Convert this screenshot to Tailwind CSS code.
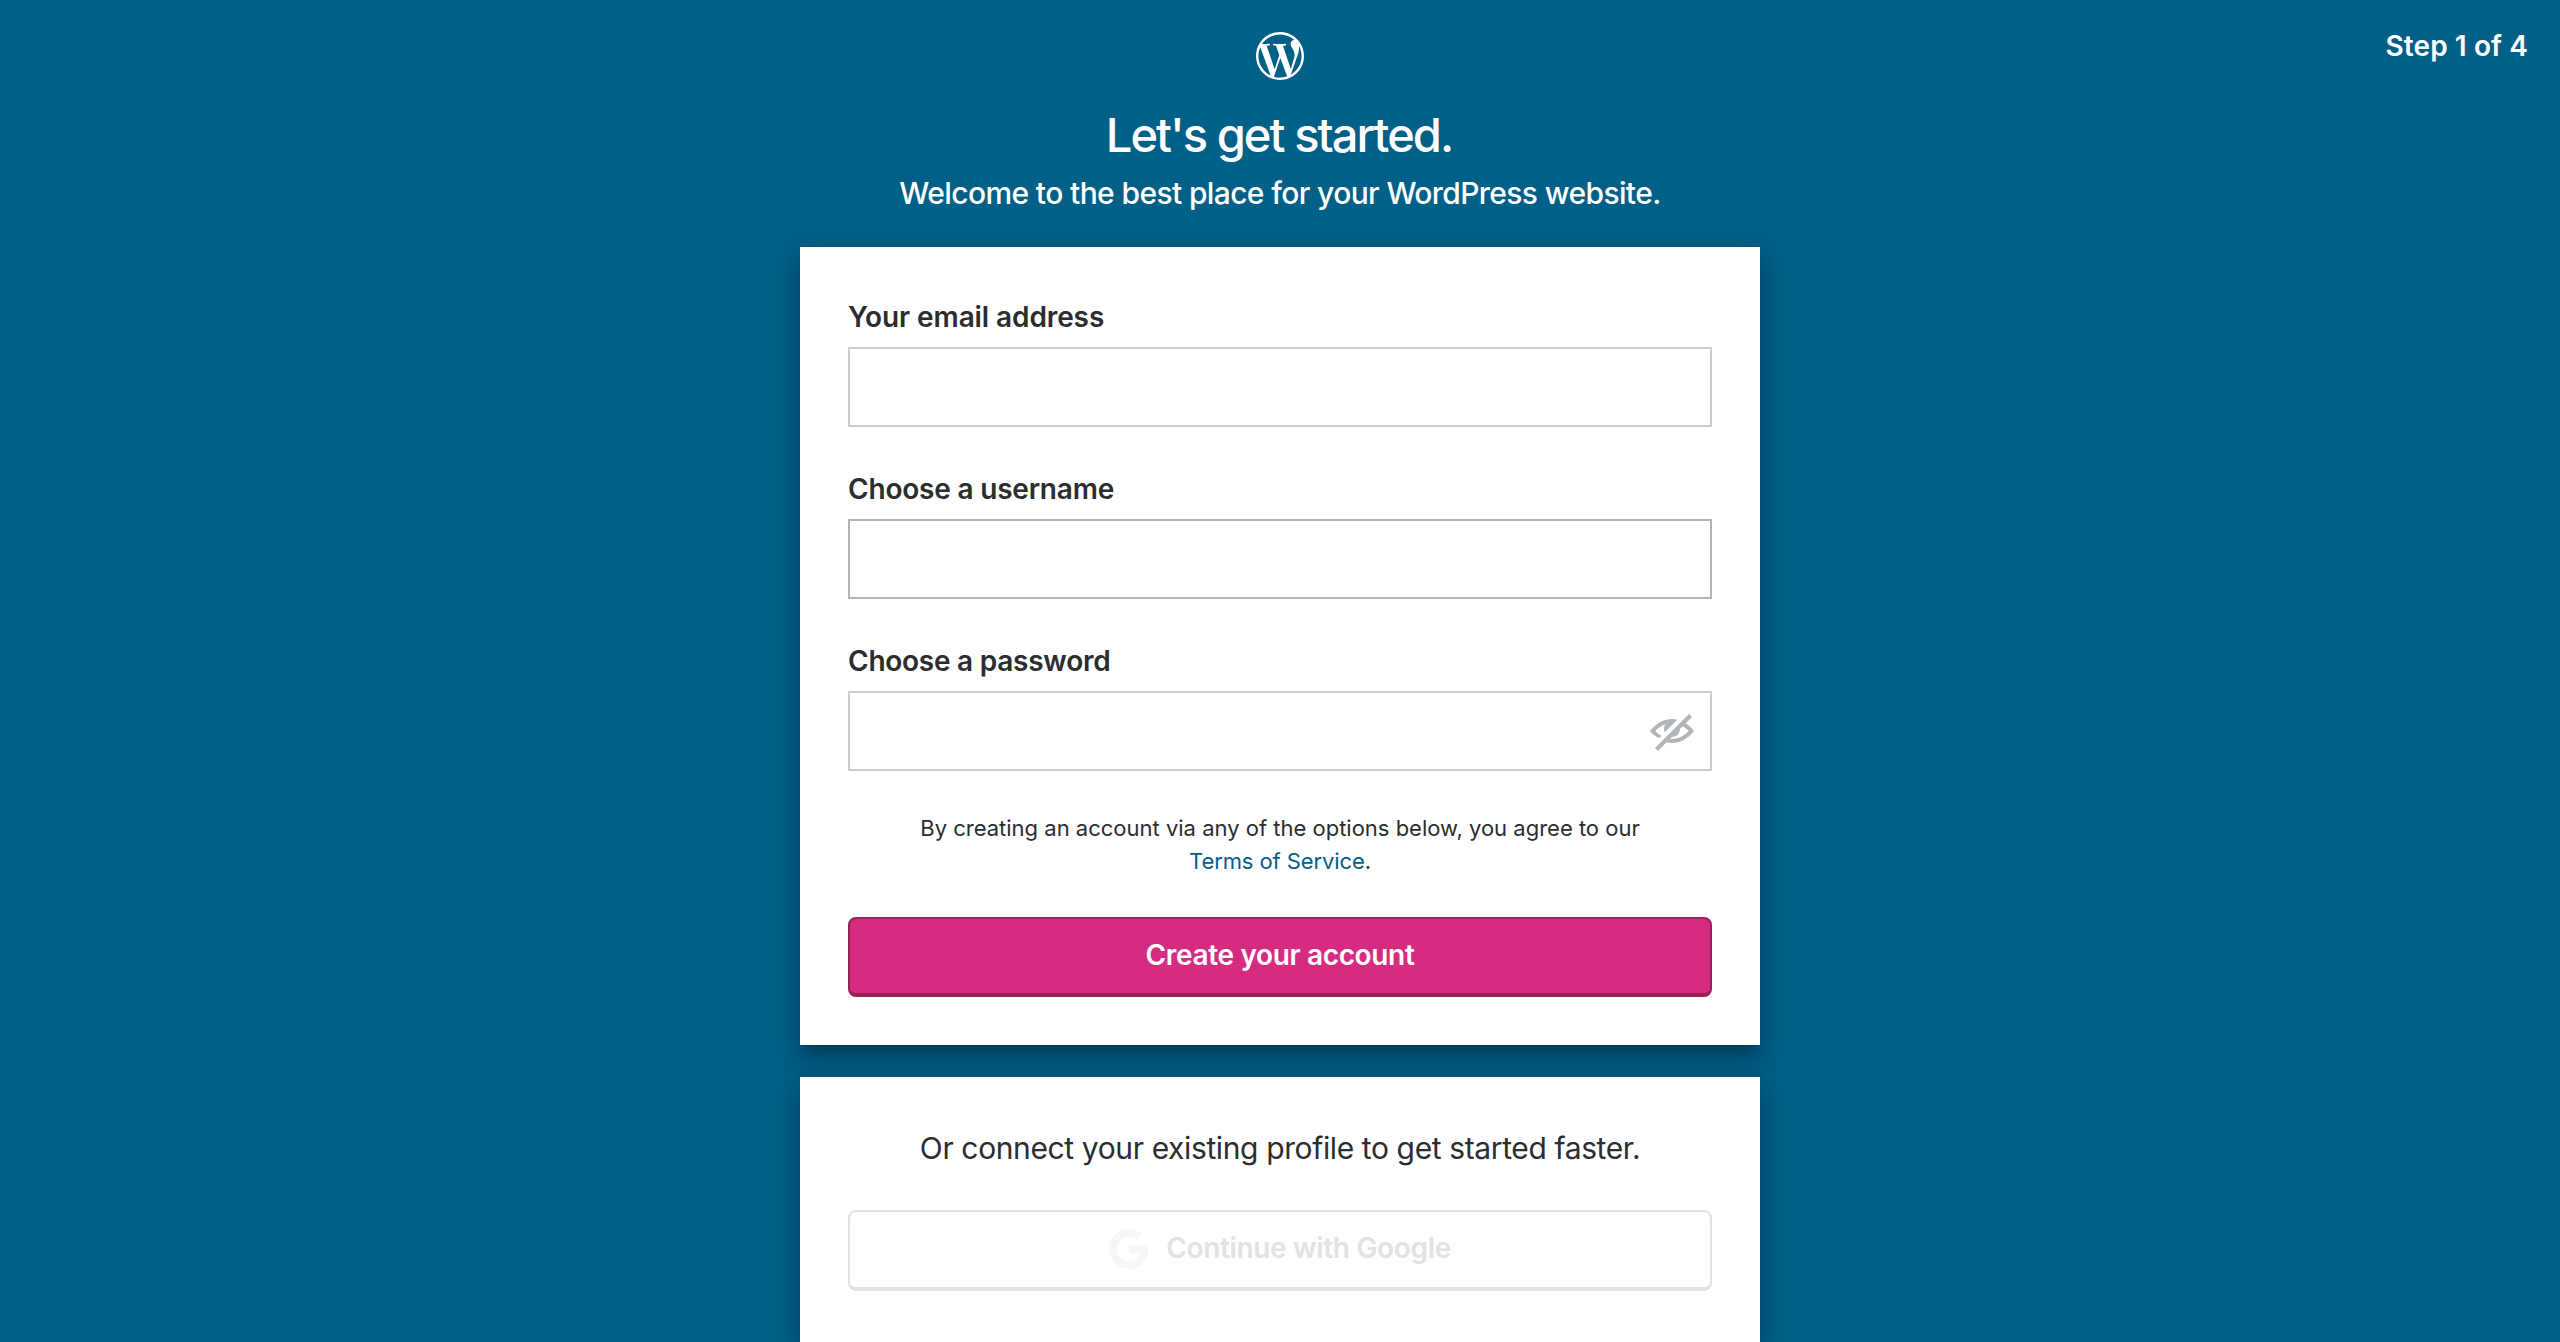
<!DOCTYPE html>
<html lang="en">
<head>
<meta charset="utf-8">
<title>Create an account — WordPress.com</title>
<script src="https://cdn.jsdelivr.net/npm/@tailwindcss/browser@4"></script>
</head>
<body class="relative h-screen overflow-hidden bg-[#016087] font-['Inter',sans-serif] text-[#2b2d2f]">
  <p class="absolute top-[26px] right-[32px] text-[28px] leading-10 font-semibold tracking-[0.1px] text-white">Step 1 of 4</p>

  <div class="flex h-full flex-col items-center pt-8">
    <svg class="size-12 shrink-0 fill-white" viewBox="0 0 24 24" aria-label="WordPress"><path d="M21.469 6.825c.84 1.537 1.318 3.3 1.318 5.175 0 3.979-2.156 7.456-5.363 9.325l3.295-9.527c.615-1.54.82-2.771.82-3.864 0-.405-.026-.78-.07-1.11m-7.981.105c.647-.03 1.232-.105 1.232-.105.582-.075.514-.93-.067-.899 0 0-1.755.135-2.88.135-1.064 0-2.85-.15-2.85-.15-.585-.03-.661.855-.075.885 0 0 .54.061 1.125.09l1.68 4.605-2.37 7.08L5.354 6.9c.649-.03 1.234-.1 1.234-.1.585-.075.516-.93-.065-.896 0 0-1.746.138-2.874.138-.2 0-.438-.008-.69-.015C4.911 3.15 8.235 1.215 12 1.215c2.809 0 5.365 1.072 7.286 2.833-.046-.003-.091-.009-.141-.009-1.06 0-1.812.923-1.812 1.914 0 .89.513 1.643 1.06 2.531.411.72.89 1.643.89 2.977 0 .915-.354 1.994-.821 3.479l-1.075 3.585-3.9-11.61.001.014zM12 22.784c-1.059 0-2.081-.153-3.048-.437l3.237-9.406 3.315 9.087c.024.053.05.101.078.149-1.12.393-2.325.609-3.582.609M1.211 12c0-1.564.336-3.05.935-4.39L7.29 21.709C3.694 19.96 1.212 16.271 1.211 12M12 0C5.385 0 0 5.385 0 12s5.385 12 12 12 12-5.385 12-12S18.615 0 12 0"/></svg>
    <h1 class="mt-[26px] pr-0.5 text-[47px] leading-[58px] font-[450] tracking-[-1.95px] text-white">Let's get started.</h1>
    <p class="mt-[9px] text-[30px] leading-10 font-medium tracking-[-0.62px] text-white">Welcome to the best place for your WordPress website.</p>

    <form class="mt-[34px] flex w-[960px] shrink-0 flex-col bg-white px-12 pt-[50px] pb-12 shadow-[0_10px_10px_-6px_rgba(0,0,0,0.2),0_16px_20px_2px_rgba(0,0,0,0.14),0_6px_28px_4px_rgba(0,0,0,0.12)]">
      <label for="email" class="text-[28px] leading-10 font-semibold tracking-[-0.1px]">Your email address</label>
      <input id="email" type="email" class="mt-2.5 h-20 w-full border-2 border-[#ccc] bg-white px-6 outline-none">
      <label for="username" class="mt-[42px] text-[28px] leading-10 font-semibold tracking-[-0.2px]">Choose a username</label>
      <input id="username" type="text" class="mt-2.5 h-20 w-full border-2 border-[#aeb4b8] bg-white px-6 outline-none">
      <label for="password" class="mt-[42px] text-[28px] leading-10 font-semibold tracking-[-0.25px]">Choose a password</label>
      <div class="mt-2.5 flex h-20 items-center border-2 border-[#ccc] bg-white pr-3.5">
        <input id="password" type="password" class="h-full flex-1 px-6 outline-none">
        <svg class="size-12 fill-[#b0b5b8]" viewBox="0 0 24 24"><path d="M1 12s4.188-6 11-6c.947 0 1.84.12 2.678.322L8.36 12.64C8.133 12.14 8 11.586 8 11c0-.937.335-1.787.875-2.47-2.483.917-4.345 2.48-5.26 3.464.61.642 1.76 1.68 3.2 2.43L5.68 15.56C2.6 14.2 1 12 1 12zm22 0s-4.188 6-11 6c-.946 0-1.836-.124-2.676-.323L5 22l-1.5-1.5 17-17L22 5l-3.147 3.147C21.5 9.785 23 12 23 12zm-2.615.006c-.678-.708-1.697-1.624-2.987-2.403L16 11c0 2.21-1.79 4-4 4l-.947.947c.31.031.624.053.947.053 3.978 0 6.943-2.478 8.385-3.994z"/></svg>
      </div>
      <p class="mt-[41px] text-center text-[22px] leading-[33px]">By creating an account via any of the options below, you agree to our<br><a class="tracking-[-0.1px] text-[#016087]">Terms of Service</a>.</p>
      <button type="button" class="mt-[39px] h-20 rounded-lg border-2 border-b-4 border-[#992053] bg-[#d52c82] pb-0.5 text-[28px] leading-10 font-semibold tracking-[-0.35px] text-white">Create your account</button>
    </form>

    <section class="mt-8 flex w-[960px] flex-1 flex-col bg-white px-12 pt-[51px] shadow-[0_10px_10px_-6px_rgba(0,0,0,0.2),0_16px_20px_2px_rgba(0,0,0,0.14),0_6px_28px_4px_rgba(0,0,0,0.12)]">
      <p class="text-center text-[30px] leading-10 tracking-[-0.38px]">Or connect your existing profile to get started faster.</p>
      <button type="button" class="mt-[42px] flex h-[81px] items-center justify-center rounded-lg border-2 border-b-4 border-[#e1e2e2] bg-white pb-0.5 text-[28px] leading-10 font-semibold tracking-[-0.33px] text-[#e1e2e2]">
        <svg class="mr-[17px] size-10 fill-[#f6f6f6]" viewBox="0 0 20 20"><path d="M19.6 10.23c0-.82-.1-1.42-.25-2.05H10v3.72h5.5c-.15.96-.74 2.31-2.04 3.22v2.45h3.16c1.89-1.73 2.98-4.3 2.98-7.34z"/><path d="M13.46 15.13c-.83.59-1.96 1-3.46 1-2.64 0-4.88-1.74-5.68-4.15H1.07v2.52C2.72 17.75 6.09 20 10 20c2.7 0 4.96-.89 6.62-2.42l-3.16-2.45z"/><path d="M3.99 10c0-.69.12-1.35.32-1.97V5.51H1.07A9.973 9.973 0 000 10c0 1.61.39 3.14 1.07 4.49l3.24-2.52c-.2-.62-.32-1.28-.32-1.97z"/><path d="M10 3.88c1.88 0 3.13.81 3.85 1.48l2.84-2.76C14.96.99 12.7 0 10 0 6.09 0 2.72 2.25 1.07 5.51l3.24 2.52C5.12 5.62 7.36 3.88 10 3.88z"/></svg>
        <span class="-mt-0.5">Continue with Google</span>
      </button>
    </section>
  </div>
</body>
</html>
